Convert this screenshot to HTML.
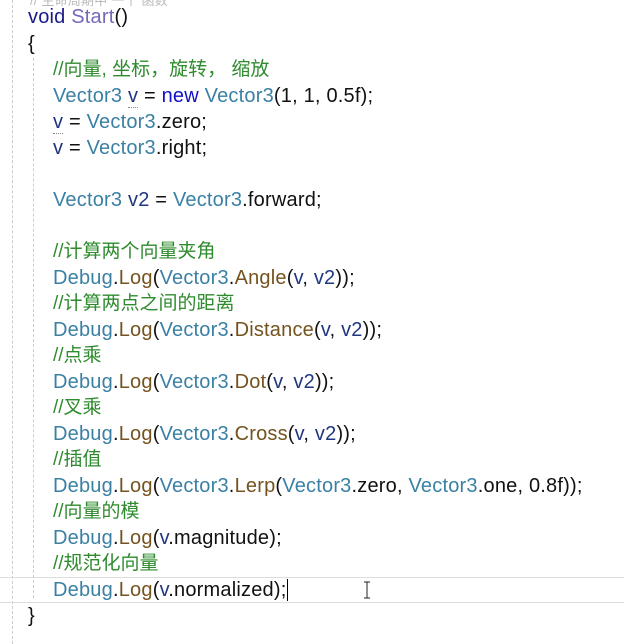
<!DOCTYPE html>
<html><head><meta charset="utf-8"><style>
html,body{margin:0;padding:0;background:#fff;width:624px;height:644px;overflow:hidden}
body{position:relative;font-family:"Liberation Sans","Noto Sans CJK SC",sans-serif;font-size:20px;letter-spacing:0.2px;color:#111}
.l{position:absolute;left:0;height:26px;line-height:26px;white-space:pre}
.cl{font-size:19px;letter-spacing:0}
.t{color:#3a80a4}.k{color:#1010c8}.m{color:#74531f}.c{color:#2e8b2e}.p{color:#1f377f}.s{color:#7468b8}
.g1{position:absolute;left:12px;top:0;height:644px;border-left:1px dashed #ccc}
.g2{position:absolute;left:33px;top:58px;height:540px;border-left:1px dashed #ccc}
.hl{position:absolute;left:0;right:0;top:577px;height:24px;border:1px solid #ddd;border-left:none;border-right:none}
.dot{border-bottom:1px dotted #888}
</style></head><body>
<div class="g1"></div><div class="g2"></div><div class="hl"></div>
<div class="l" style="top:-12px;left:30px;color:#bbb;font-size:13px">// 生命周期中 一个 函数</div>
<div class="l" style="top:4px;left:28px"><span style="color:#1a1a8a">void</span> <span class="s">Start</span>()</div>
<div class="l" style="top:31px;left:28px">{</div>
<div class="l cl" style="top:57px;left:53px"><span class="c">//向量, 坐标，旋转， 缩放</span></div>
<div class="l" style="top:83px;left:53px"><span class="t">Vector3</span> <span class="p dot">v</span> = <span class="k">new</span> <span class="t">Vector3</span>(1, 1, 0.5f);</div>
<div class="l" style="top:109px;left:53px"><span class="p dot">v</span> = <span class="t">Vector3</span>.zero;</div>
<div class="l" style="top:135px;left:53px"><span class="p">v</span> = <span class="t">Vector3</span>.right;</div>
<div class="l" style="top:187px;left:53px"><span class="t">Vector3</span> <span class="p">v2</span> = <span class="t">Vector3</span>.forward;</div>
<div class="l cl" style="top:239px;left:53px"><span class="c">//计算两个向量夹角</span></div>
<div class="l" style="top:265px;left:53px"><span class="t">Debug</span>.<span class="m">Log</span>(<span class="t">Vector3</span>.<span class="m">Angle</span>(<span class="p">v</span>, <span class="p">v2</span>));</div>
<div class="l cl" style="top:291px;left:53px"><span class="c">//计算两点之间的距离</span></div>
<div class="l" style="top:317px;left:53px"><span class="t">Debug</span>.<span class="m">Log</span>(<span class="t">Vector3</span>.<span class="m">Distance</span>(<span class="p">v</span>, <span class="p">v2</span>));</div>
<div class="l cl" style="top:343px;left:53px"><span class="c">//点乘</span></div>
<div class="l" style="top:369px;left:53px"><span class="t">Debug</span>.<span class="m">Log</span>(<span class="t">Vector3</span>.<span class="m">Dot</span>(<span class="p">v</span>, <span class="p">v2</span>));</div>
<div class="l cl" style="top:395px;left:53px"><span class="c">//叉乘</span></div>
<div class="l" style="top:421px;left:53px"><span class="t">Debug</span>.<span class="m">Log</span>(<span class="t">Vector3</span>.<span class="m">Cross</span>(<span class="p">v</span>, <span class="p">v2</span>));</div>
<div class="l cl" style="top:447px;left:53px"><span class="c">//插值</span></div>
<div class="l" style="top:473px;left:53px"><span class="t">Debug</span>.<span class="m">Log</span>(<span class="t">Vector3</span>.<span class="m">Lerp</span>(<span class="t">Vector3</span>.zero, <span class="t">Vector3</span>.one, 0.8f));</div>
<div class="l cl" style="top:499px;left:53px"><span class="c">//向量的模</span></div>
<div class="l" style="top:525px;left:53px"><span class="t">Debug</span>.<span class="m">Log</span>(<span class="p">v</span>.magnitude);</div>
<div class="l cl" style="top:551px;left:53px"><span class="c">//规范化向量</span></div>
<div class="l" style="top:577px;left:53px"><span class="t">Debug</span>.<span class="m">Log</span>(<span class="p">v</span>.normalized);<span style="border-left:1px solid #000;margin-left:1px"></span></div>
<div class="l" style="top:603px;left:28px">}</div>
<svg style="position:absolute;left:362px;top:581px" width="10" height="18"><path d="M2 1h6M5 1v16M2 17h6" stroke="#222" stroke-width="1" fill="none"/></svg>
</body></html>
